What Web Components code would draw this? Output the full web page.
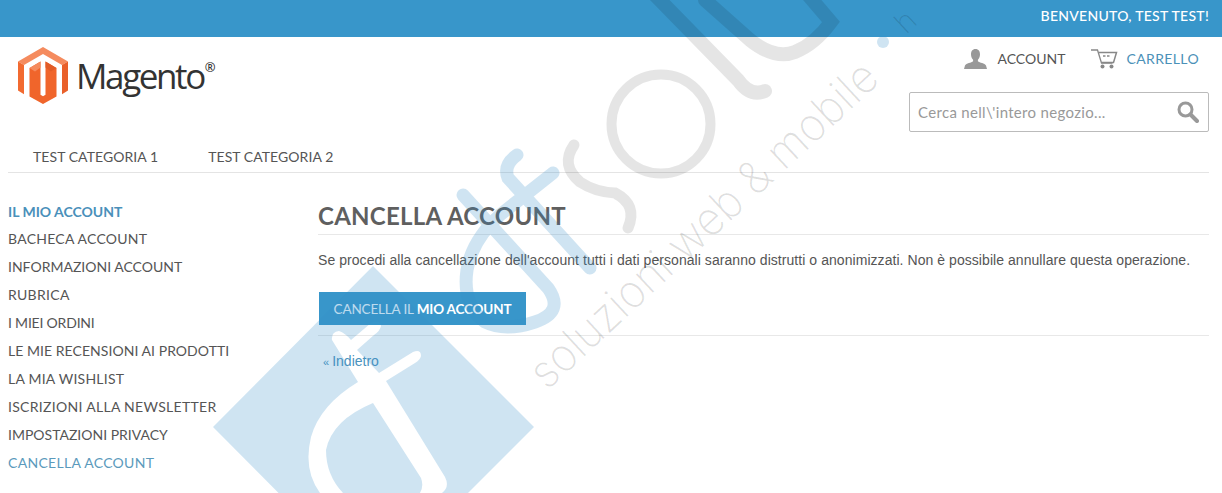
<!DOCTYPE html>
<html lang="it"><head><meta charset="utf-8"><title>Cancella account</title>
<style>
html,body{margin:0;padding:0;height:493px;overflow:hidden;background:#fff}
body{font-family:Lato,"Liberation Sans",sans-serif;color:#555}
</style></head>
<body>
<shop-page>
  <top-bar>BENVENUTO, TEST TEST!</top-bar>
  <shop-header></shop-header>
  <main-nav>
    <nav-link>TEST CATEGORIA 1</nav-link>
    <nav-link>TEST CATEGORIA 2</nav-link>
  </main-nav>
  <account-layout>
    <account-sidebar slot="side" heading="IL MIO ACCOUNT">
      <side-link style="letter-spacing:.25px">BACHECA ACCOUNT</side-link>
      <side-link style="letter-spacing:0">INFORMAZIONI ACCOUNT</side-link>
      <side-link>RUBRICA</side-link>
      <side-link style="letter-spacing:-.2px">I MIEI ORDINI</side-link>
      <side-link style="letter-spacing:.05px">LE MIE RECENSIONI AI PRODOTTI</side-link>
      <side-link style="letter-spacing:.23px">LA MIA WISHLIST</side-link>
      <side-link>ISCRIZIONI ALLA NEWSLETTER</side-link>
      <side-link style="letter-spacing:0">IMPOSTAZIONI PRIVACY</side-link>
      <side-link active>CANCELLA ACCOUNT</side-link>
    </account-sidebar>
    <delete-panel></delete-panel>
  </account-layout>
</shop-page>
<water-mark></water-mark>
<script>
function def(name, html, init){
  customElements.define(name, class extends HTMLElement{
    constructor(){super();const r=this.attachShadow({mode:'open'});r.innerHTML=html;}
    connectedCallback(){ if(init) init(this); }
  });
}
def('shop-page',`<style>:host{display:block;width:1222px}</style><slot></slot>`);
def('top-bar',`<style>:host{display:flex;justify-content:flex-end;align-items:center;height:37px;padding:0 13px 5px 0;box-sizing:border-box;background:#3896ca;color:#fff;font:500 14px/20px Lato,sans-serif;letter-spacing:.27px}</style><slot></slot>`);
def('shop-header',`<style>
:host{display:flex;justify-content:space-between;height:101px;padding:0 13px 0 18px;box-sizing:border-box}
.logo{display:flex;align-items:flex-start;padding-top:10px}
.word{font:500 35px/46px "Open Sans",sans-serif;color:#333;letter-spacing:-2.4px;margin-left:8px;padding-top:6px}
.reg{font:600 13px/14px "Open Sans",sans-serif;color:#333;margin:13px 0 0 1px}
.right{display:flex;flex-direction:column;align-items:flex-end}
.links{display:flex;align-items:center;height:44px;padding:0 10px 0 0;font:400 14px/20px Lato,sans-serif;color:#555}
.links svg{display:block}
.acc{margin-left:10px}.cart{margin-left:26px}
.car{margin-left:8px;color:#4b91b8;letter-spacing:.37px}
.search{display:flex;align-items:center;justify-content:space-between;width:300px;height:40px;box-sizing:border-box;margin-top:11px;border:1px solid #bbb;border-radius:2px;padding:0 9px 0 8px;font:400 15px/20px Lato,sans-serif;color:#999;background:#fff;letter-spacing:.32px}
</style>
<div class="logo">
<svg width="50" height="57" viewBox="0 0 50 57">
<polygon fill="#f58b5e" points="25,0 50,14.5 44,18 25,7 6,18 0,14.5"/>
<polygon fill="#f26a30" points="0,14.5 6,18 6,47.3 0,43.5"/>
<polygon fill="#e9602a" points="50,14.5 44,18 44,47.3 50,43.5"/>
<polygon fill="#f0652b" points="11.5,21 22.5,14.6 22.5,47.8 25,49.2 27.5,47.8 27.5,14.6 38.5,21 38.5,49.6 25,57 11.5,49.6"/>
<polygon fill="#f58b5e" points="11.5,21 22.5,14.6 22.5,20.5 17,24.4"/>
<polygon fill="#e25c27" points="38.5,21 27.5,14.6 27.5,20.5 33,24.4"/>
</svg>
<span class="word">Magento</span><span class="reg">®</span>
</div>
<div class="right">
<div class="links">
<svg width="23" height="20" viewBox="0 0 23 20"><path fill="#999" d="M11.5 0C8.4 0 7 2.4 7 5.2c0 2.3.9 4.3 2.1 5.5v1.6c-1.6 1.5-7 2-8.1 4.2L0 20h23l-1-3.5c-1.1-2.2-6.5-2.7-8.1-4.2v-1.6c1.2-1.2 2.1-3.2 2.1-5.5C16 2.4 14.600 0 11.500 0z"/></svg>
<span class="acc">ACCOUNT</span>
<svg class="cart" width="27" height="20" viewBox="0 0 27 20" fill="none" stroke="#888"><path stroke-width="1.300" d="M0 1h6.500l4 13h11"/><path stroke-width="1.500" d="M7.500 3.500h18l-3 10h-12"/><path stroke-width="1.500" stroke-dasharray="2.500 1.500" d="M12 7h8"/><circle cx="11.500" cy="17.500" r="2" fill="#888" stroke="none"/><circle cx="20.500" cy="17.500" r="2" fill="#888" stroke="none"/></svg>
<span class="car">CARRELLO</span>
</div>
<div class="search"><span>Cerca nell\\'intero negozio...</span>
<svg width="22" height="22" viewBox="0 0 22 22" fill="none" stroke="#999"><circle cx="8.500" cy="8.500" r="6.500" stroke-width="3"/><path d="M13.500 13.500l6.500 6.500" stroke-width="4" stroke-linecap="round"/></svg></div>
</div>`);
def('main-nav',`<style>:host{display:flex;gap:50px;height:35px;margin:0 13px 0 8px;padding:9px 0 0 25px;box-sizing:border-box;border-bottom:1px solid #e4e4e4}</style><slot></slot>`);
def('nav-link',`<style>:host{display:block;font:400 14px/20px Lato,sans-serif;color:#555;letter-spacing:.06px}</style><slot></slot>`);
def('account-layout',`<style>:host{display:grid;grid-template-columns:310px 1fr;margin:0 13px 0 8px}</style><slot name="side"></slot><slot></slot>`);
def('account-sidebar',`<style>:host{display:block;padding-top:26px}
h3{margin:0;font:700 14px/26px Lato,sans-serif;color:#4a90ba;letter-spacing:0}</style><h3></h3><slot></slot>`,el=>{el.shadowRoot.querySelector('h3').textContent=el.getAttribute('heading')});
def('side-link',`<style>:host{display:block;font:400 14px/28px Lato,sans-serif;color:#555;letter-spacing:.3px;white-space:nowrap}:host([active]){color:#5b9abc}</style><slot></slot>`);
def('delete-panel',`<style>:host{display:block;padding-top:26px}
h1{margin:0;height:36px;box-sizing:border-box;border-bottom:1px solid #e8e8e8;font:700 24px/34px Lato,sans-serif;color:#5f5f5f;letter-spacing:.26px}
p{margin:15px 0 22px;font:400 14px/20px "Liberation Sans",Arial,sans-serif;color:#555;letter-spacing:.055px}
.btn{display:flex;align-items:center;justify-content:center;width:207px;height:33px;margin-left:1px;background:#3896ca;color:#e8f3fa;font:400 13.5px/20px Lato,sans-serif;letter-spacing:-.16px;white-space:pre}
.btn b{font-weight:700;color:#fff}
.rule{height:1px;margin-top:10px;background:#e8e8e8}
.back{margin:15px 0 0 5px;font:400 14px/20px "Liberation Sans",Arial,sans-serif;color:#4b93be}
.back i{font-style:normal;font-size:11px}
</style>
<h1>CANCELLA ACCOUNT</h1>
<p>Se procedi alla cancellazione dell'account tutti i dati personali saranno distrutti o anonimizzati. Non è possibile annullare questa operazione.</p>
<div class="btn">CANCELLA IL <b>MIO ACCOUNT</b></div>
<div class="rule"></div>
<div class="back"><i>« </i>Indietro</div>`);
def('water-mark',`<style>:host{position:absolute;left:0;top:0;width:1222px;height:493px;overflow:hidden;pointer-events:none}
svg{display:block}</style>
<svg width="1222" height="493" viewBox="0 0 1222 493">
<path fill="#3890ca" fill-opacity=".24" fill-rule="evenodd" d="M373 266L534 427L373 588L213 427Z
M332 340Q331 332 339 331Q345 333 351 340L371 323Q380 319 381 326Q380 331 374 335L357 350L379 373L413 352Q421 349 421 356Q420 360 415 363L386 381L445 477Q450 487 442 493L442 500L420 500L420 493Q424 486 421 478L373 403Q332 420 326 450Q326 475 343 493L343 500L320 500L320 493Q303 470 311 437Q320 405 358 382Z"/>
<path fill="none" stroke="#3890ca" stroke-opacity=".24" stroke-width="13" stroke-linecap="round" d="M463 195L548 288Q565 312 535 322Q505 332 485 322Q462 305 467 270Q472 240 500 215L553 173M517 155Q503 165 508 178L590 268"/>
<circle cx="883" cy="42" r="6" fill="#3890ca" fill-opacity=".24"/>
<g fill="none" stroke="#000" stroke-opacity=".1" stroke-linecap="round">
<path stroke-width="11" d="M574 145Q560 165 580 182Q595 192 615 193Q638 205 628 228"/>
<circle cx="661" cy="124" r="49.500" stroke-width="10"/>
<path stroke-width="14" d="M650 -10L738 80Q750 97 765 91"/>
<path stroke-width="14" d="M705 0L750 40Q775 60 795 52Q815 44 831 22L808 -5"/>
</g>
<g fill="#000" fill-opacity=".13" font-family="Inter,Lato,sans-serif" font-weight="200">
<text font-size="46" transform="translate(547 391) rotate(-42.800)" textLength="456" lengthAdjust="spacingAndGlyphs">soluzioni web &amp; mobile</text>
<text font-size="30" transform="translate(906 35) rotate(-42.800)">h</text>
</g>
</svg>`);
</script>
</body></html>
